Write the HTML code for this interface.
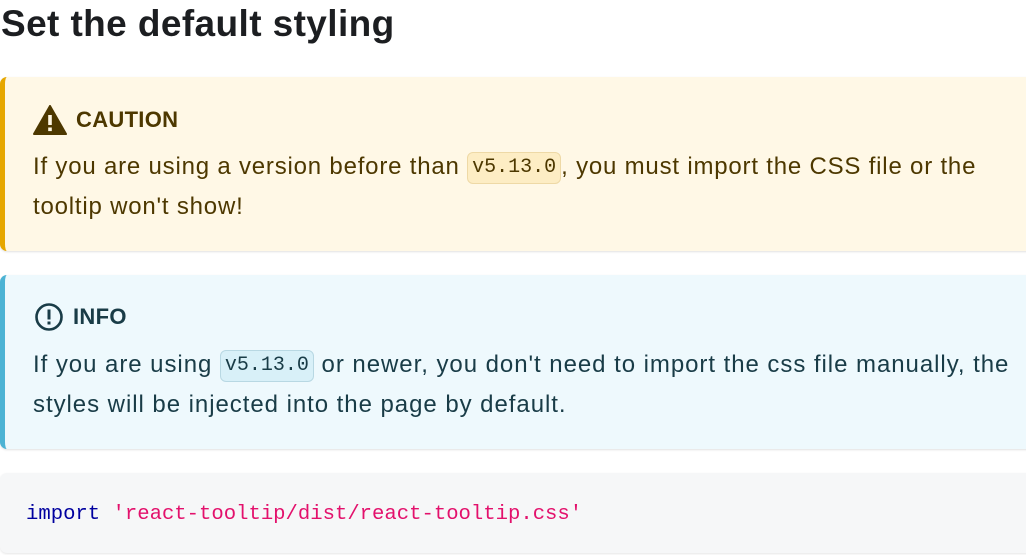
<!DOCTYPE html>
<html><head><meta charset="utf-8"><style>
body{margin:0;width:1026px;height:555px;overflow:hidden;background:#fff;font-family:"Liberation Sans",sans-serif;}
h1{position:absolute;left:1px;top:1px;margin:0;font-size:37px;line-height:46px;font-weight:bold;color:#1c1e21;letter-spacing:0.4px}
.ad{position:absolute;left:0;width:1040px;border-radius:7px;box-sizing:border-box;box-shadow:0 1px 2px rgba(0,0,0,.12)}
.t{position:absolute;left:33px;font-weight:bold;font-size:22px;display:flex;align-items:center;letter-spacing:0.3px}
.t svg{margin-right:9px}
.b{position:absolute;left:33px;font-size:24px;line-height:40px;white-space:nowrap;letter-spacing:0.8px}
code{font-family:"Liberation Mono",monospace;font-size:20px;line-height:24px;display:inline-block;padding:3px 4px;border-radius:6px;border:1px solid;letter-spacing:0;vertical-align:middle}
</style></head><body>
<h1>Set the default styling</h1>
<div class="ad" style="top:77px;height:174px;background:#fff8e6;border-left:5px solid #e6a700;color:#4d3800">
 <div class="t" style="top:28px;left:28px"><svg width="34" height="30" viewBox="0 0 34 30"><path d="M17 1L33 29H1Z" fill="#4d3800" stroke="#4d3800" stroke-width="2" stroke-linejoin="round"/><rect x="15.2" y="10" width="3.6" height="10" fill="#fff8e6"/><rect x="15.2" y="22.5" width="3.6" height="3.6" fill="#fff8e6"/></svg>CAUTION</div>
 <div class="b" style="top:70px;left:28px">If you are using a version before than <code style="background:#fdedc4;border-color:#eed9a6">v5.13.0</code>, you must import the CSS file or the<br>tooltip won't show!</div>
</div>
<div class="ad" style="top:275px;height:174px;background:#eef9fd;border-left:5px solid #4cb3d4;color:#193c47">
 <div class="t" style="top:27px;left:29px"><svg width="30" height="30" viewBox="0 0 30 30"><circle cx="15" cy="15" r="12.5" fill="none" stroke="#193c47" stroke-width="2.6"/><rect x="13.5" y="7.5" width="3" height="10" fill="#193c47"/><rect x="13.5" y="19.5" width="3" height="3" fill="#193c47"/></svg>INFO</div>
 <div class="b" style="top:70px;left:28px;letter-spacing:0.95px">If you are using <code style="background:#d8f0f8;border-color:#b8d8e3">v5.13.0</code> or newer, you don't need to import the css file manually, the<br>styles will be injected into the page by default.</div>
</div>
<div style="position:absolute;top:473px;left:0;width:1040px;height:80px;background:#f6f7f8;border-radius:7px;box-shadow:0 1px 2px rgba(0,0,0,.1)">
 <div style="position:absolute;left:26px;top:28px;font-family:'Liberation Mono',monospace;font-size:20.6px;line-height:28px;white-space:nowrap"><span style="color:#00009f">import</span> <span style="color:#e3116c">'react-tooltip/dist/react-tooltip.css'</span></div>
</div>
</body></html>
